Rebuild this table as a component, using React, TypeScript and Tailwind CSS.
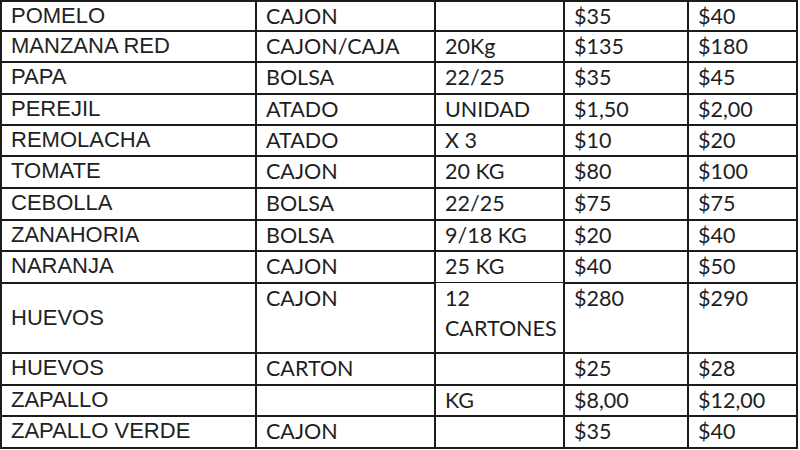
const rows = [
  { name: "POMELO", pack: "CAJON", size: "", min: "$35", max: "$40" },
  { name: "MANZANA RED", pack: "CAJON/CAJA", size: "20Kg", min: "$135", max: "$180" },
  { name: "PAPA", pack: "BOLSA", size: "22/25", min: "$35", max: "$45" },
  { name: "PEREJIL", pack: "ATADO", size: "UNIDAD", min: "$1,50", max: "$2,00" },
  { name: "REMOLACHA", pack: "ATADO", size: "X 3", min: "$10", max: "$20" },
  { name: "TOMATE", pack: "CAJON", size: "20 KG", min: "$80", max: "$100" },
  { name: "CEBOLLA", pack: "BOLSA", size: "22/25", min: "$75", max: "$75" },
  { name: "ZANAHORIA", pack: "BOLSA", size: "9/18 KG", min: "$20", max: "$40" },
  { name: "NARANJA", pack: "CAJON", size: "25 KG", min: "$40", max: "$50" },
  { name: "HUEVOS", pack: "CAJON", size: "12 CARTONES", min: "$280", max: "$290", tall: true },
  { name: "HUEVOS", pack: "CARTON", size: "", min: "$25", max: "$28" },
  { name: "ZAPALLO", pack: "", size: "KG", min: "$8,00", max: "$12,00" },
  { name: "ZAPALLO VERDE", pack: "CAJON", size: "", min: "$35", max: "$40" },
]

const calibri = "bg-white pl-[9px] text-[21.5px] leading-[28px] text-[#1e1e1e] font-['Lato',sans-serif] overflow-visible whitespace-nowrap"

export default function App() {
  return (
    <div className="w-[800px] h-[450px] bg-white overflow-hidden">
      <div className="w-[798px] bg-[#1c1c1c] p-[2px] grid grid-cols-[253px_177px_127px_122px_107px] grid-rows-[28px_29px_30px_29px_29px_30px_30px_29px_30px_68px_30px_29px_30px] gap-[2px]">
        {rows.map((r, i) => (
          <div key={i} className="contents">
            <div
              className={
                r.tall
                  ? "bg-white pl-[9px] flex items-center text-[22px] leading-6 text-[#222] font-['Liberation_Sans',Arial,sans-serif] whitespace-nowrap"
                  : "bg-white pl-[9px] pt-[2px] text-[22px] leading-6 text-[#222] font-['Liberation_Sans',Arial,sans-serif] whitespace-nowrap"
              }
            >
              {r.name}
            </div>
            <div className={calibri}>{r.pack}</div>
            {r.tall ? (
              <div className="bg-white pl-[9px] text-[21.5px] leading-[30px] -mt-px text-[#1e1e1e] font-['Lato',sans-serif]">
                12
                <br />
                CARTONES
              </div>
            ) : (
              <div className={calibri}>{r.size}</div>
            )}
            <div className={calibri}>{r.min}</div>
            <div className={calibri}>{r.max}</div>
          </div>
        ))}
      </div>
    </div>
  )
}
